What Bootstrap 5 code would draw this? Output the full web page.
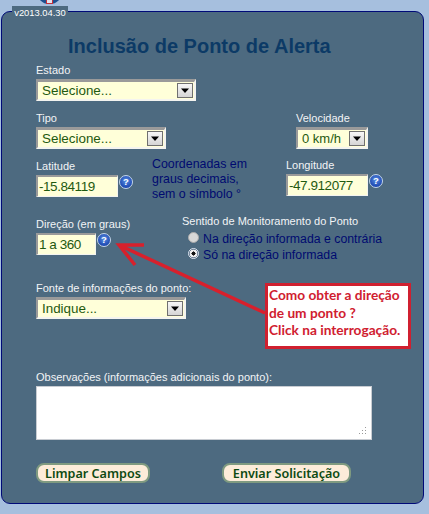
<!DOCTYPE html>
<html lang="pt">
<head>
<meta charset="utf-8">
<title>Inclusão de Ponto de Alerta</title>
<link href="https://cdn.jsdelivr.net/npm/bootstrap@5.3.0/dist/css/bootstrap.min.css" rel="stylesheet">
<style>
html,body{height:514px;overflow:hidden}
body{background:#a6bfde;font-family:"Liberation Sans",Arial,sans-serif;margin:0}
.stage{position:relative;width:429px;height:514px;padding:11px 5px 0 1px}
.crest{position:absolute;left:37px;top:-9px;width:25px;height:13px;background:#1d4f8f;border-radius:0 0 12px 12px}
.crest::after{content:"";position:absolute;left:9px;top:8px;width:7px;height:5px;background:#e4e4ee;border:1px solid #c4303a}
.tag{position:absolute;left:12px;top:6px;width:56px;height:11px;background:#4d6a80;color:#fff;font-size:9.4px;line-height:13px;text-align:center}
.panel{height:493px;background:#4d6a80;border:1px solid #000a78;border-radius:9px;padding:23px 0 0 34px}
.heading{margin:0 0 6px 32px;font-size:20px;line-height:22px;font-weight:700;color:#0c3a66;white-space:nowrap}
.lbl{display:block;margin:0;height:16px;font-size:11px;line-height:15px;color:#f2f4f6;white-space:nowrap}
.old-select{display:block;height:22px;padding:0 0 0 4px;border-style:solid;border-width:3px 2px 2px 2px;border-color:#9a9a9a #f4f4f0 #f4f4f0 #9a9a9a;border-radius:0;font-size:13.4px;line-height:17px;color:#1f5a10;background-color:#ffffd9;background-repeat:no-repeat;background-position:right 1px top 1px;background-size:16px 15px;box-shadow:none;
background-image:url("data:image/svg+xml,%3Csvg xmlns='http://www.w3.org/2000/svg' viewBox='0 0 16 15'%3E%3Cdefs%3E%3ClinearGradient id='g' x1='0' y1='0' x2='0' y2='1'%3E%3Cstop offset='0' stop-color='%23f8f8f8'/%3E%3Cstop offset='1' stop-color='%23d4d4d4'/%3E%3C/linearGradient%3E%3C/defs%3E%3Crect x='.5' y='.5' width='15' height='14' fill='url(%23g)' stroke='%23707070'/%3E%3Cpath d='M4 5.5h8L8 10z' fill='%23000'/%3E%3C/svg%3E")}
.w-160{width:160px}.w-130{width:130px}.w-72{width:72px}.w-150{width:150px}
.w-72{font-size:13px;padding-left:4px}
.old-input{display:block;height:22px;padding:0 0 0 1px;border-style:solid;border-width:2px 1px 1px 2px;border-color:#9a9a9a #f4f4f0 #f4f4f0 #9a9a9a;border-radius:0;background:#ffffd9;color:#1f5a10;font-size:13.5px;letter-spacing:-.45px;line-height:18px;box-shadow:none}
.w-82{width:82px}.w-60{width:60px}
.hint{flex:none;width:14px;height:14px;margin:0 0 0 1px;border-radius:50%;background:radial-gradient(circle at 50% 40%,#5a90e4,#1a44ae 75%);border:1.5px solid #c3d6ea;color:#fff;font-size:9.5px;font-weight:700;line-height:11px;text-align:center}
.gap-a{margin-top:10px}
.col-lat{width:116px}.col-coord{width:134px}.col-dir{width:146px}.col-tipo{width:260px}
.coord-note{margin:-2px 0 -5px;font-size:12.4px;line-height:15px;color:#000a70}
.lift{margin-top:-1px}
.row-dir{margin-top:20px}
.sentido-lbl{margin-top:-3px;height:17px}
.opt{display:flex;align-items:center;height:16px;margin-left:6px;font-size:12.3px;color:#000a70;white-space:nowrap}
.opt .form-check-input{width:11px;height:11px;margin:-3px 4px 0 0;flex:none;background-color:#d8d8d8;border:1px solid #aaa;box-shadow:none}
.opt .form-check-input:checked{background-color:#3a5f88;border-color:#dfe6ee;background-image:radial-gradient(circle,#111 0 30%,#eee 34% 60%,#5a6f88 64%)}
.row-fonte{margin-top:18px}
.row-obs{margin-top:51px}
.note-box{display:block;width:336px;height:54px;padding:2px;border:1px solid #c8ccd2;border-radius:0;box-shadow:none;resize:none;background:#fff no-repeat right 4px bottom 4px/8px 8px;
background-image:url("data:image/svg+xml,%3Csvg xmlns='http://www.w3.org/2000/svg' viewBox='0 0 8 8' fill='%23999'%3E%3Crect x='6' y='0' width='1' height='1'/%3E%3Crect x='6' y='3' width='1' height='1'/%3E%3Crect x='3' y='3' width='1' height='1'/%3E%3Crect x='6' y='6' width='1' height='1'/%3E%3Crect x='3' y='6' width='1' height='1'/%3E%3Crect x='0' y='6' width='1' height='1'/%3E%3C/svg%3E")}
.row-btns{margin-top:23px;gap:72px}
.old-btn{height:20px;padding:0;border:2px solid #7f9a80;border-radius:8px;background:#fdecd9;color:#0e4a12;font-family:"Noto Sans",sans-serif;font-size:12.6px;font-weight:600;line-height:15px}
.btn-a{width:114px}.btn-b{width:129px}
.pointer{position:absolute;left:110px;top:235px;width:165px;height:90px;pointer-events:none}
.callout{position:absolute;left:265px;top:283px;width:146px;height:66px;padding:0 0 0 1px;background:#fff;border:3px solid #d02030;color:#d02030;font-family:Lato,sans-serif;font-size:13.7px;font-weight:700;line-height:17.7px;white-space:nowrap}
</style>
</head>
<body>
<div class="stage">
  <div class="crest"></div>
  <form class="panel">
    <h1 class="heading">Inclusão de Ponto de Alerta</h1>
    <div>
      <label class="lbl">Estado</label>
      <select class="form-select old-select w-160"><option>Selecione...</option></select>
    </div>
    <div class="d-flex gap-a">
      <div class="col-tipo">
        <label class="lbl">Tipo</label>
        <select class="form-select old-select w-130"><option>Selecione...</option></select>
      </div>
      <div>
        <label class="lbl">Velocidade</label>
        <select class="form-select old-select w-72"><option>0 km/h</option></select>
      </div>
    </div>
    <div class="d-flex gap-a">
      <div class="col-lat">
        <label class="lbl">Latitude</label>
        <div class="d-flex">
          <input class="form-control old-input w-82" value="-15.84119">
          <span class="hint">?</span>
        </div>
      </div>
      <p class="col-coord coord-note">Coordenadas em<br>graus decimais,<br>sem o símbolo °</p>
      <div class="lift">
        <label class="lbl">Longitude</label>
        <div class="d-flex">
          <input class="form-control old-input w-82" value="-47.912077">
          <span class="hint">?</span>
        </div>
      </div>
    </div>
    <div class="d-flex row-dir">
      <div class="col-dir">
        <label class="lbl">Direção (em graus)</label>
        <div class="d-flex">
          <input class="form-control old-input w-60" value="1 a 360">
          <span class="hint">?</span>
        </div>
      </div>
      <div>
        <label class="lbl sentido-lbl">Sentido de Monitoramento do Ponto</label>
        <label class="opt"><input class="form-check-input" type="radio" name="s">Na direção informada e contrária</label>
        <label class="opt"><input class="form-check-input" type="radio" name="s" checked>Só na direção informada</label>
      </div>
    </div>
    <div class="row-fonte">
      <label class="lbl">Fonte de informações do ponto:</label>
      <select class="form-select old-select w-150"><option>Indique...</option></select>
    </div>
    <div class="row-obs">
      <label class="lbl">Observações (informações adicionais do ponto):</label>
      <textarea class="form-control note-box"></textarea>
    </div>
    <div class="d-flex row-btns">
      <button type="button" class="btn old-btn btn-a">Limpar Campos</button>
      <button type="button" class="btn old-btn btn-b">Enviar Solicitação</button>
    </div>
  </form>
  <div class="tag">v2013.04.30</div>
  <svg class="pointer" viewBox="0 0 165 90"><path d="M155 78 9 10M34 10H9L25 30" fill="none" stroke="#d8202c" stroke-width="3.5"/></svg>
  <div class="callout">Como obter a direção<br>de um ponto ?<br>Click na interrogação.</div>
</div>
<script src="https://cdn.jsdelivr.net/npm/bootstrap@5.3.0/dist/js/bootstrap.bundle.min.js"></script>
</body>
</html>
